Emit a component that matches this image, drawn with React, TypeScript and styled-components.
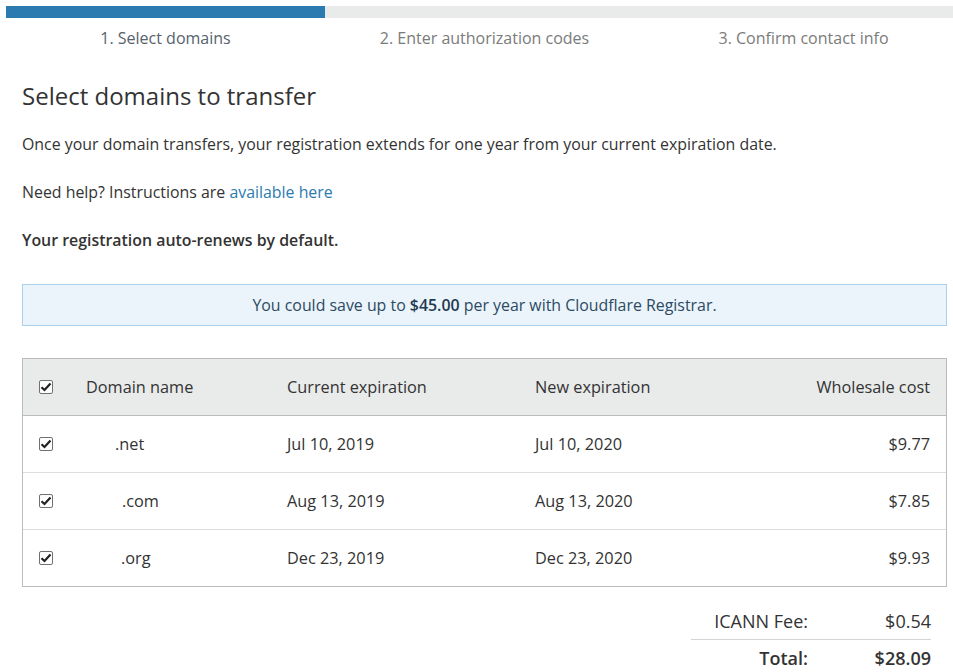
import React from 'react';
import styled, {createGlobalStyle} from 'styled-components';

const GlobalStyle = createGlobalStyle`
  body {
    margin: 0;
    background: #fff;
    font-family: "Open Sans", "Noto Sans", sans-serif;
    color: #333;
  }
`

type DomainRow = {
    name: string
    indent: number
    current: string
    next: string
    cost: string
}

const rows: DomainRow[] = [
    {name: '.net', indent: 29, current: 'Jul 10, 2019', next: 'Jul 10, 2020', cost: '$9.77'},
    {name: '.com', indent: 36, current: 'Aug 13, 2019', next: 'Aug 13, 2020', cost: '$7.85'},
    {name: '.org', indent: 35, current: 'Dec 23, 2019', next: 'Dec 23, 2020', cost: '$9.93'},
]

const Page = styled.div`
  padding: 6px 0 0 6px;
  overflow: hidden;
`

const Progress = styled.div`
  height: 12px;
  background: #e9eaea;
  display: flex;
`

const ProgressFill = styled.div<{ $width: number }>`
  width: ${p => p.$width}px;
  background: #2c7bb0;
`

const Steps = styled.div`
  display: grid;
  grid-template-columns: repeat(3, 319px);
  height: 40px;
  align-items: center;
`

const Step = styled.div<{ $active?: boolean }>`
  text-align: center;
  font-size: 16px;
  white-space: nowrap;
  color: ${p => p.$active ? '#56626d' : '#7b7b7b'};
`

const Content = styled.div`
  padding: 0 0 0 16px;
  width: 925px;
`

const Title = styled.h1`
  margin: 22px 0 0 0;
  font-size: 24px;
  font-weight: 400;
  line-height: 32px;
  color: #333;
`

const Text = styled.p<{ $strong?: boolean }>`
  margin: 16px 0 0 0;
  font-size: 15.9px;
  line-height: 32px;
  font-weight: ${p => p.$strong ? 600 : 400};
`

const Link = styled.a`
  color: #2c7bb0;
  text-decoration: none;
`

const Notice = styled.div`
  margin-top: 28px;
  height: 40px;
  display: flex;
  align-items: center;
  justify-content: center;
  background: #ebf4fa;
  border: 1px solid #a9d1ee;
  font-size: 15.9px;
  color: #2c4a63;

  b {
    color: #1f3a52;
    font-weight: 600;
  }
`

const Table = styled.div`
  margin-top: 32px;
  border: 1px solid #bbb;
`

const Row = styled.div<{ $head?: boolean }>`
  display: grid;
  grid-template-columns: 63px 201px 248px 1fr 1fr;
  align-items: center;
  height: 56px;
  padding-right: 16px;
  font-size: 16.3px;
  font-weight: ${p => p.$head ? 500 : 400};
  background: ${p => p.$head ? '#e9eaea' : '#fff'};
  border-bottom: 1px solid ${p => p.$head ? '#bbb' : '#ddd'};

  &:last-child {
    border-bottom: none;
  }
`

const Cell = styled.div<{ $right?: boolean }>`
  text-align: ${p => p.$right ? 'right' : 'left'};
  white-space: nowrap;
`

const Domain = styled.span<{ $indent: number }>`
  padding-left: ${p => p.$indent}px;
`

const CheckCell = styled.div`
  display: flex;
  padding-left: 16px;
`

const Box = styled.span`
  width: 14px;
  height: 14px;
  box-sizing: border-box;
  border: 1px solid #707070;
  border-radius: 2px;
  background: #fff;
  display: flex;
  align-items: center;
  justify-content: center;
`

const Totals = styled.div`
  margin: 16px 16px 0 auto;
  width: 240px;
`

const TotalLine = styled.div<{ $bold?: boolean }>`
  display: grid;
  grid-template-columns: 117px 1fr;
  height: 36px;
  align-items: center;
  font-size: 18px;
  font-weight: ${p => p.$bold ? 600 : 400};

  & > span {
    text-align: right;
  }

  & + & {
    border-top: 1px solid #d4d4d4;
  }
`

const Check = () => (
    <Box>
        <svg width="12" height="10" viewBox="0 0 12 10">
            <path d="M1.5 5.2 L4.5 8 L10.5 1.5" fill="none" stroke="#222" strokeWidth="2.2"/>
        </svg>
    </Box>
)

export default function App() {
    return (
        <Page>
            <GlobalStyle/>
            <Progress>
                <ProgressFill $width={319}/>
            </Progress>
            <Steps>
                <Step $active>1. Select domains</Step>
                <Step>2. Enter authorization codes</Step>
                <Step>3. Confirm contact info</Step>
            </Steps>
            <Content>
                <Title>Select domains to transfer</Title>
                <Text>Once your domain transfers, your registration extends for one year from your current expiration date.</Text>
                <Text>Need help? Instructions are <Link href="#">available here</Link></Text>
                <Text $strong>Your registration auto-renews by default.</Text>
                <Notice>You could save up to&nbsp;<b>$45.00</b>&nbsp;per year with Cloudflare Registrar.</Notice>
                <Table>
                    <Row $head>
                        <CheckCell><Check/></CheckCell>
                        <Cell>Domain name</Cell>
                        <Cell>Current expiration</Cell>
                        <Cell>New expiration</Cell>
                        <Cell $right>Wholesale cost</Cell>
                    </Row>
                    {rows.map(r => (
                        <Row key={r.name}>
                            <CheckCell><Check/></CheckCell>
                            <Cell><Domain $indent={r.indent}>{r.name}</Domain></Cell>
                            <Cell>{r.current}</Cell>
                            <Cell>{r.next}</Cell>
                            <Cell $right>{r.cost}</Cell>
                        </Row>
                    ))}
                </Table>
                <Totals>
                    <TotalLine><span>ICANN Fee:</span><span>$0.54</span></TotalLine>
                    <TotalLine $bold><span>Total:</span><span>$28.09</span></TotalLine>
                </Totals>
            </Content>
        </Page>
    )
}
